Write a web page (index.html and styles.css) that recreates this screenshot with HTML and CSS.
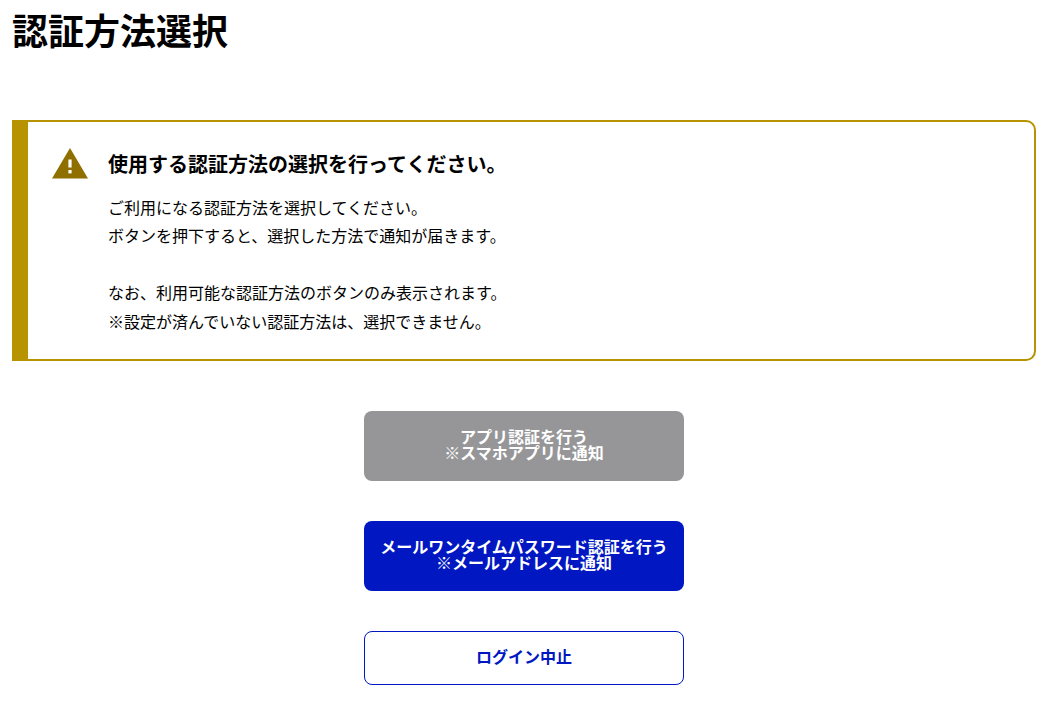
FILE: index.html
```html
<!DOCTYPE html>
<html lang="ja">
<head>
<meta charset="utf-8">
<title>認証方法選択</title>
<link rel="stylesheet" href="styles.css">
</head>
<body>
<h1 class="title">認証方法選択</h1>
<section class="notice">
  <div class="notice-head">
    <svg class="notice-icon" viewBox="0 0 36 32" width="36" height="32" aria-hidden="true">
      <path fill="#8f6f00" d="M18 0 L36 30.5 H0 Z"/>
      <rect x="16.4" y="11.5" width="3.2" height="8" fill="#fff"/>
      <rect x="16.4" y="22" width="3.2" height="3.4" fill="#fff"/>
    </svg>
    <h2 class="notice-title">使用する認証方法の選択を行ってください。</h2>
  </div>
  <div class="notice-body">
    <p>ご利用になる認証方法を選択してください。<br>ボタンを押下すると、選択した方法で通知が届きます。<br><br>なお、利用可能な認証方法のボタンのみ表示されます。<br>※設定が済んでいない認証方法は、選択できません。</p>
  </div>
</section>
<div class="actions">
  <button class="btn btn-disabled" type="button">アプリ認証を行う<br>※スマホアプリに通知</button>
  <button class="btn btn-primary" type="button">メールワンタイムパスワード認証を行う<br>※メールアドレスに通知</button>
  <button class="btn btn-secondary" type="button">ログイン中止</button>
</div>
</body>
</html>
```
FILE: styles.css
```css
* { box-sizing: border-box; }
html, body { margin: 0; padding: 0; }
body {
  padding: 0 12px;
  background: #fff;
  color: #000;
  font-family: "Noto Sans CJK JP", "Noto Sans", sans-serif;
  overflow: hidden;
}
.title {
  margin: 0;
  padding-top: 5px;
  height: 120px;
  font-size: 36px;
  line-height: 48px;
  font-weight: 700;
}
.notice {
  width: 1024px;
  height: 241px;
  border: 2px solid #b89300;
  border-left-width: 16px;
  border-radius: 0 10px 10px 0;
  padding: 26px 0 0 24px;
}
.notice-head {
  display: flex;
  align-items: center;
  gap: 20px;
  height: 32px;
}
.notice-title {
  margin: 0;
  font-size: 20px;
  line-height: 28px;
  font-weight: 700;
}
.notice-body {
  margin-top: 12.7px;
  padding-left: 56px;
  font-size: 16px;
  line-height: 28.6px;
}
.notice-body p { margin: 0; }
.actions {
  display: flex;
  flex-direction: column;
  align-items: center;
  gap: 40px;
  margin-top: 50px;
}
.btn {
  width: 320px;
  height: 70px;
  border: 0;
  border-radius: 8px;
  font-family: inherit;
  font-size: 16px;
  line-height: 16px;
  font-weight: 700;
  color: #fff;
  padding: 0 0 4px 1px;
}
.btn-disabled { background: #969698; }
.btn-primary { background: #0017c1; }
.btn-secondary {
  height: 54px;
  background: #fff;
  color: #0017c1;
  border: 1px solid #0017c1;
}
```
